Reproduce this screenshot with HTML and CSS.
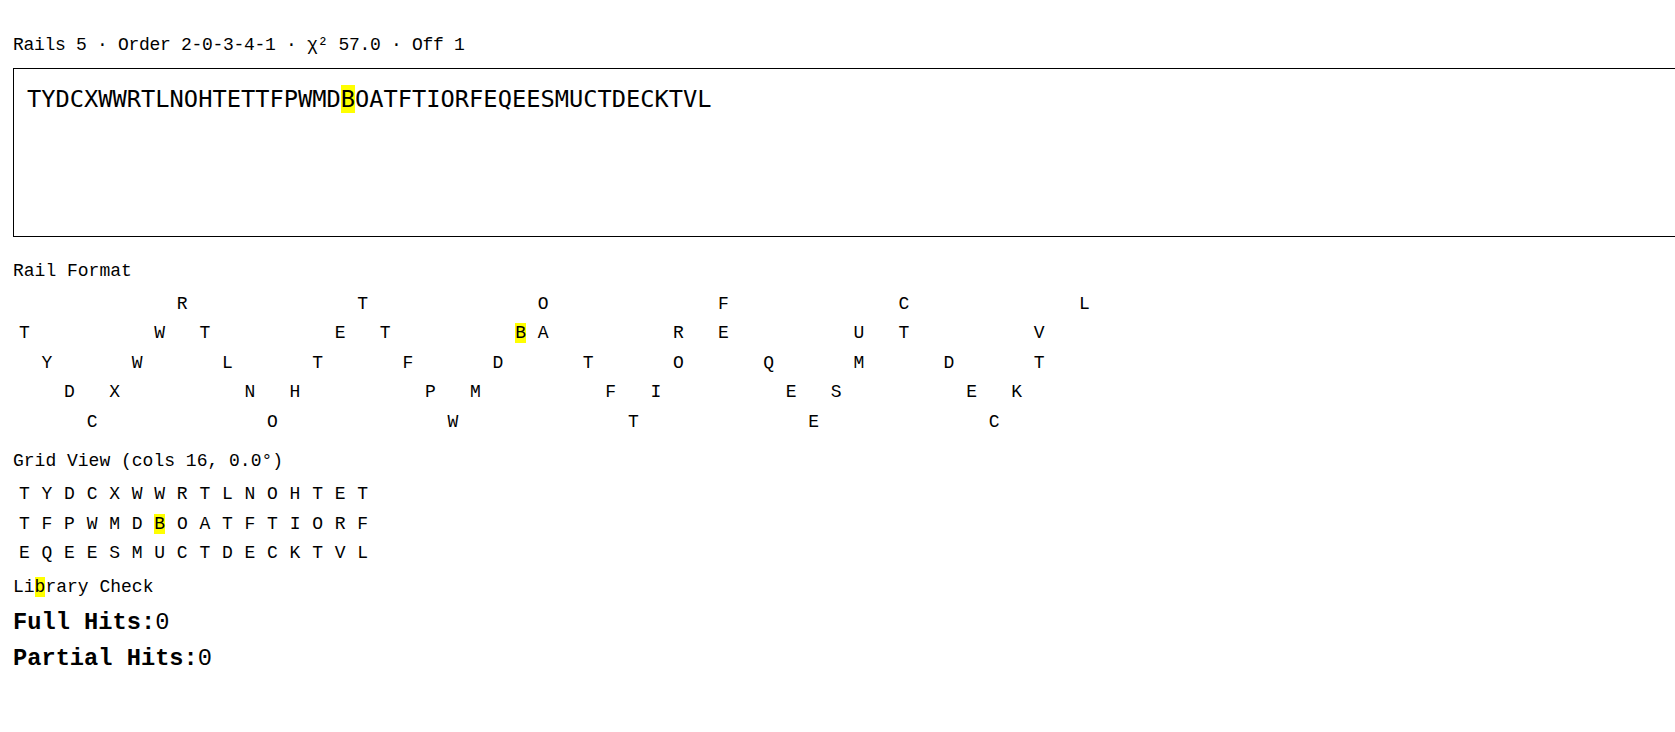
FILE: index.html
```html
<!DOCTYPE html>
<html lang="en">
<head>
    <meta charset="UTF-8">
    <title>Rail Fence</title>
    <link rel="stylesheet" href="styles.css">
</head>
<body>
    <div class="meta">Rails 5 · Order 2-0-3-4-1 · χ² 57.0 · Off 1</div>

    <div class="cipher">TYDCXWWRTLNOHTETTFPWMD<span class="hl">B</span>OATFTIORFEQEESMUCTDECKTVL</div>

    <div class="label rail-label">Rail Format</div>
    <div class="rails">
        <div class="row">       R       T       O       F       C       L</div>
        <div class="row">T     W T     E T     <span class="hl">B</span>A     R E     U T     V </div>
        <div class="row"> Y   W   L   T   F   D   T   O   Q   M   D   T  </div>
        <div class="row">  D X     N H     P M     F I     E S     E K   </div>
        <div class="row">   C       O       W       T       E       C    </div>
    </div>

    <div class="label grid-label">Grid View (cols 16, 0.0°)</div>
    <div class="grid">
        <div class="row">TYDCXWWRTLNOHTET</div>
        <div class="row">TFPWMD<span class="hl">B</span>OATFTIORF</div>
        <div class="row">EQEESMUCTDECKTVL</div>
    </div>

    <div class="label lib-label">Li<span class="hl">b</span>rary Check</div>
    <div class="hits full"><b>Full Hits:</b>0</div>
    <div class="hits partial"><b>Partial Hits:</b>0</div>
</body>
</html>
```

FILE: styles.css
```css
*{
    margin: 0;
    padding: 0;
}
html,body{
    overflow-x: hidden;
}
body{
    padding: 0 13px;
    font-family: "Liberation Mono", "Courier New", monospace;
    font-size: 18px;
    color: #000;
    background: #fff;
}
.hl{
    background: #ff0;
}
.meta{
    margin-top: 35px;
    line-height: 20px;
    letter-spacing: -0.3px;
}
.cipher{
    margin-top: 13px;
    width: 100%;
    height: 143px;
    padding: 12px 13px;
    border: 1px solid #000;
    font-family: "DejaVu Sans Mono", monospace;
    font-size: 23.7px;
    line-height: 36px;
}
.label{
    line-height: 20px;
}
.rail-label{
    margin-top: 24px;
}
.rails{
    margin-top: 8.5px;
}
.rails .row,
.grid .row{
    height: 29.5px;
    line-height: 29.5px;
    white-space: pre;
    letter-spacing: 11.75px;
    padding-left: 6px;
}
.row .hl{
    letter-spacing: 0;
    margin-right: 11.75px;
}
.grid-label{
    margin-top: 13.5px;
}
.grid{
    margin-top: 9.5px;
}
.lib-label{
    margin-top: 8px;
}
.hits{
    font-size: 23.7px;
    line-height: 28px;
}
.hits b{
    font-weight: bold;
}
.full{
    margin-top: 12.5px;
}
.partial{
    margin-top: 7.5px;
}
```
